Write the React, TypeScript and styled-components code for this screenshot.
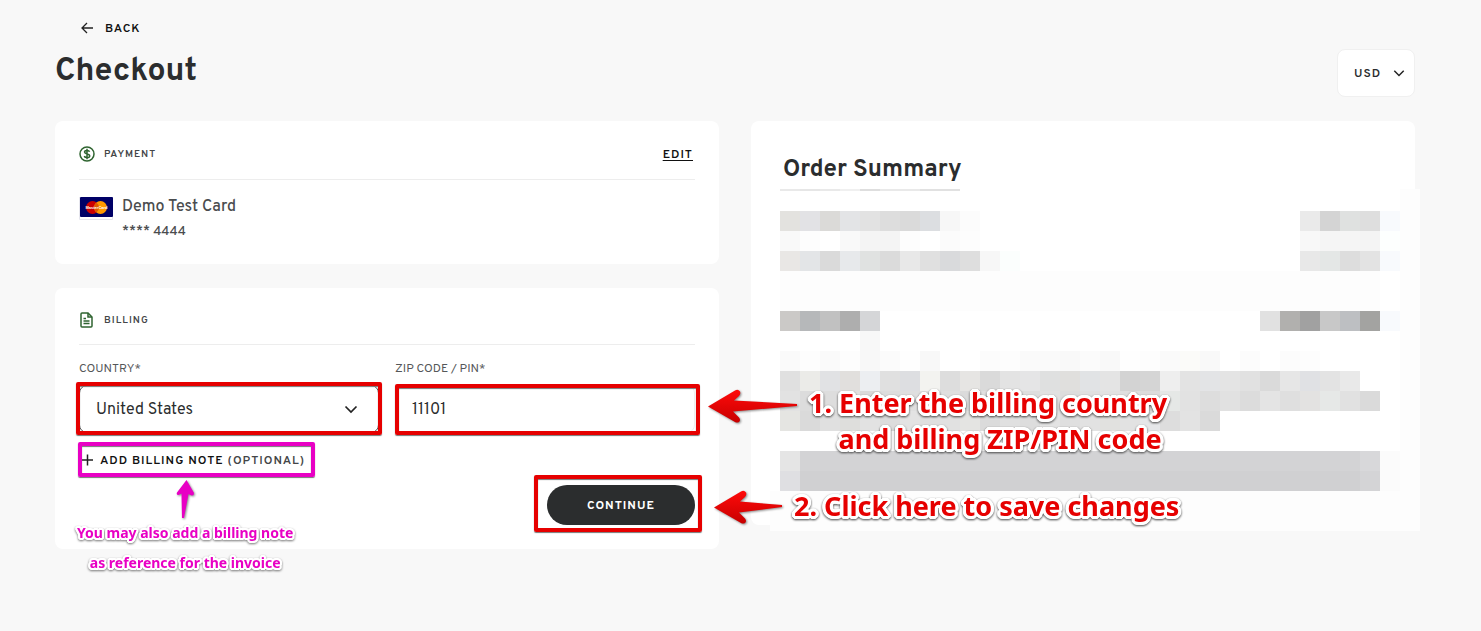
import React from "react";
import styled, { createGlobalStyle } from "styled-components";

const GlobalStyle = createGlobalStyle`
  *, *::before, *::after { box-sizing: border-box; }
  body {
    margin: 0;
    background: #f8f8f8;
    color: #2b2d2e;
    font-family: Overpass, Roboto, "Liberation Sans", sans-serif;
  }
  button, input, select { font: inherit; color: inherit; }
`;

const RED = "#e60000";
const MAGENTA = "#e800c4";

/* White halo of the given radius, built from shadows around the glyphs. */
const halo = (r: number) => {
  const steps: string[] = [];
  for (let x = -r; x <= r; x++) {
    for (let y = -r; y <= r; y++) {
      if ((x || y) && x * x + y * y <= r * r + 1) steps.push(`${x}px ${y}px 0 #fff`);
    }
  }
  return steps.join(", ");
};

const Page = styled.main`
  padding: 20px 66px 48px 55px;
`;

const BackLink = styled.a`
  display: inline-flex;
  align-items: center;
  gap: 12px;
  margin: 0 0 13px 26px;
  height: 16px;
  font-size: 12px;
  line-height: 16px;
  font-weight: 600;
  letter-spacing: 1px;
  color: #111;
  text-decoration: none;
`;

const BackText = styled.span`
  padding-top: 2px;
`;

const TitleRow = styled.header`
  display: flex;
  justify-content: space-between;
  align-items: flex-start;
  margin-bottom: 24px;
`;

const Title = styled.h1`
  margin: 0;
  font-size: 32px;
  line-height: 46px;
  font-weight: 700;
`;

const SelectWrap = styled.div`
  position: relative;
  display: flex;
  align-items: center;
`;

const SelectChevron = styled.svg<{ $right: number }>`
  position: absolute;
  right: ${(p) => p.$right}px;
  pointer-events: none;
`;

const CurrencySelect = styled.select`
  appearance: none;
  width: 78px;
  height: 48px;
  padding: 2px 0 0 16px;
  border: 1px solid #f0f0f0;
  border-radius: 8px;
  background: #fff;
  font-size: 12px;
  font-weight: 600;
  letter-spacing: 1px;
`;

const Columns = styled.div`
  display: grid;
  grid-template-columns: repeat(2, minmax(0, 1fr));
  align-items: start;
  gap: 32px;
`;

const Stack = styled.div`
  display: grid;
  gap: 24px;
`;

const Card = styled.section`
  padding: 24px;
  border-radius: 8px;
  background: #fff;
`;

const CardHeader = styled.div`
  display: flex;
  align-items: center;
  gap: 9px;
  padding-bottom: 16px;
  border-bottom: 1px solid #ededed;
`;

const CardIcon = styled.svg`
  display: block;
  flex: none;
`;

const CardTitle = styled.h2`
  flex: 1;
  margin: 0;
  padding-top: 2px;
  font-size: 10px;
  line-height: 14px;
  font-weight: 600;
  letter-spacing: 1px;
  color: #444648;
`;

const EditButton = styled.button`
  padding: 2px 2px 0 0;
  border: 0;
  background: none;
  font-size: 12px;
  line-height: 16px;
  font-weight: 600;
  letter-spacing: 1px;
  text-decoration: underline;
  text-underline-offset: 2px;
  color: #111;
`;

const PaymentMethod = styled.div`
  display: flex;
  gap: 9px;
  padding-top: 16px;
`;

const CardName = styled.p`
  margin: 0 0 6px;
  font-size: 16px;
  line-height: 22px;
  font-weight: 500;
  color: #4a4c4e;
`;

const CardNumber = styled.p`
  margin: 0;
  font-size: 13px;
  line-height: 16px;
  font-weight: 500;
  color: #4a4c4e;
`;

const Fields = styled.div`
  display: grid;
  grid-template-columns: 1fr 1fr;
  gap: 16px;
  padding-top: 16px;
`;

const Label = styled.label`
  display: block;
  margin-bottom: 8px;
  font-size: 12px;
  line-height: 16px;
  color: #555759;
`;

const CountrySelect = styled.select`
  appearance: none;
  width: 100%;
  height: 48px;
  padding: 2px 16px 0;
  border: 1px solid #555;
  border-radius: 8px;
  background: #fff;
  font-size: 16px;
`;

const ZipInput = styled.input`
  width: 100%;
  height: 48px;
  padding: 2px 16px 0;
  border: 1px solid #eee;
  border-radius: 8px;
  background: #fff;
  font-size: 16px;
`;

const Highlight = styled.div<{ $color: string; $inset: string }>`
  position: relative;
  width: fit-content;
  &::after {
    content: "";
    position: absolute;
    inset: ${(p) => p.$inset};
    border: 4px solid ${(p) => p.$color};
    border-radius: 2px;
    box-shadow: 0 1px 1px #777, inset 0 1px 1px #777;
    pointer-events: none;
  }
`;

const FieldHighlight = styled(Highlight)`
  width: 100%;
`;

const NoteHighlight = styled(Highlight)`
  margin-top: 16px;
`;

const ContinueHighlight = styled(Highlight)`
  margin: 14px 0 0 auto;
`;

const NoteButton = styled.button`
  display: flex;
  align-items: center;
  gap: 6px;
  padding: 2px 0 0;
  border: 0;
  background: none;
  font-size: 12px;
  line-height: 20px;
  font-weight: 600;
  letter-spacing: 1px;
  color: #111;
`;

const PlusIcon = styled.svg`
  margin-bottom: 2px;
`;

const Optional = styled.span`
  color: #444648;
`;

const ContinueButton = styled.button`
  display: block;
  width: 148px;
  height: 40px;
  padding: 2px 0 0;
  border: 0;
  border-radius: 20px;
  background: #2b2d2e;
  color: #fff;
  font-size: 12px;
  font-weight: 700;
  letter-spacing: 1px;
`;

const Callout = styled.div<{ $left: number; $top: number }>`
  position: absolute;
  z-index: 2;
  left: calc(100% + ${(p) => p.$left}px);
  top: ${(p) => p.$top}px;
  display: flex;
  align-items: flex-start;
  gap: 12px;
  white-space: nowrap;
`;

const CalloutText = styled.p`
  margin: 0;
  text-align: center;
  font-family: "Noto Sans", "Open Sans", sans-serif;
  font-size: 27px;
  line-height: 36px;
  font-weight: 700;
  color: ${RED};
  text-shadow: ${halo(3)};
  filter: drop-shadow(0 1px 1px #444);
`;

const SecondLine = styled.span`
  display: block;
  padding-left: 24px;
`;

const NoteCallout = styled.div`
  position: absolute;
  z-index: 2;
  top: 31px;
  left: -2px;
  white-space: nowrap;
`;

const NoteText = styled.p`
  margin: 0;
  text-align: center;
  font-family: "Noto Sans", "Open Sans", sans-serif;
  font-size: 14px;
  line-height: 30px;
  font-weight: 700;
  color: ${MAGENTA};
  text-shadow: ${halo(2)};
  filter: drop-shadow(0 1px 1px #777);
`;

const NoteArrow = styled.svg`
  display: block;
  margin-left: 99px;
  filter: drop-shadow(1px 1px 1px #888);
`;

const Arrow = styled.svg<{ $drop: number }>`
  display: block;
  margin-top: ${(p) => p.$drop}px;
  overflow: visible;
  filter: drop-shadow(1px 1px 1px #888);
`;

const SummaryCard = styled(Card)`
  padding: 32px 0 0 19px;
  height: 404px;
`;

const SummaryTitle = styled.h2`
  margin: 0 0 2px 13px;
  font-size: 24px;
  line-height: 34px;
  font-weight: 700;
`;

const Mosaic = styled.svg`
  display: block;
  overflow: visible;
`;

type Run = { x: number; y: number; cells: string };

/* Redacted order lines: each run is a strip of 20px blocks, colours in hex. */
const RUNS: Run[] = [
  { x: 780, y: 211, cells: "e3e2df e2e2e5 dbdad8 e3e4e6 e2e2e2 dddddd dadada dcdee1 f7f7f7 fcfcfc" },
  { x: 1300, y: 211, cells: "eaeaea d4d4d4 dfe1e0 dedede f8fafd" },
  { x: 780, y: 231, cells: "f9f9f9 fdfdfd ffffff f9f9f9 f4f4f4 f4f4f4 fdfdfd ffffff fbfbfb fdfdfd" },
  { x: 1300, y: 231, cells: "f8f8f8 f5f5f5 f5f5f5 f4f4f4 fdfffe" },
  { x: 780, y: 251, cells: "e9e7e5 e3e5e7 dadada e7e9eb e0e2e1 dbdbdb e8e8e8 e0e0e0 d9dadc dedede f7f7f7 fbfefd" },
  { x: 1300, y: 251, cells: "e8e8e8 e4e7e6 dddddd e3e3e3 f8fafd" },
  { x: 780, y: 311, cells: "cbc9c7 b6b8ba c1c1c1 aeaeae d5d6d8" },
  { x: 1260, y: 311, cells: "e1e1e1 b1b0ae a1a1a1 c8c8c8 bdbfc2 a3a3a1 f8fafd" },
  { x: 860, y: 331, cells: "f8f8f8" },
  { x: 780, y: 351, cells: "fafafa fdfdfd fafafa fdfdfd f8f8f8 fbfbfb fefefe f8f8f8 ffffff ffffff fcfcfc fdfdfd fafafa fafafa f9f9f9 fbfbfb f9f9f9 fefefe fdfdfd fafafa fbfbf9 f9f9f9 ffffff fcfcfc ffffff fcfcfc fdfdfd" },
  { x: 780, y: 371, cells: "e0e0e0 ebebe8 e1e2e4 e1dfdd eceef1 e0e0e0 dddee1 f3f3f0 dddddd e6e5e3 dadada e3e3e3 e5e5e6 dfe0e0 e0dfdd e1e3e5 e4e4e4 d3d3d3 d5d5d5 eeeeee e3e3e3 e3e4e6 e4e4e4 e1e1e1 dadada e6e6e6 e0e1e4 e3e3e3 e9e9e9" },
  { x: 780, y: 391, cells: "e2e2e2 dcdcdc dddddd e2e1df dadada dddddd dfdfdf e3e3e3 dfdfdf dbdbdb e0e0e0 e2e2e2 dedede e1e1e1 dddddd e0e0e0 e2e2e2 dfdfdf dcdcdc e5e8e6 e2e2e2 dddddd e1e1e1 dcdcdc e4e4e4 dfdfdf e3e2e1 e6e8e7 e1e1e1 dadada" },
  { x: 780, y: 411, cells: "e5e5e2 dadada e0e0e0 dededc e2e2e2 dcdcdc e3e3e3 dfdfdf e1e1e1 e4e4e2 dbdbdb e0e0e0 dddddd e3e3e3 dfdfdf e2e2e2 e1e1df e2e2e2 e5e7e9 dddddd e3e3e3 dadada" },
];

const STRIP = ["e9e9e9", "e6e6e6", "e9e9e9", "f0f0f0", "dedede", "e9e9e9", "e9e9e9", "e1e1e1", "e1e1e1"];

function RedactedLines() {
  return (
    <Mosaic width="650" height="342" viewBox="770 189 650 342" shapeRendering="crispEdges" aria-hidden="true">
      <rect x="1400" y="189" width="20" height="342" fill="#fdfdfd" />
      <rect x="780" y="271" width="600" height="40" fill="#fdfdfd" />
      <rect x="770" y="491" width="650" height="40" fill="#fdfdfd" />
      {STRIP.map((c, i) => (
        <rect key={i} x={780 + i * 20} y="189" width="20" height="2" fill={"#" + c} />
      ))}
      {RUNS.map((run) =>
        run.cells.split(" ").map((c, i) => (
          <rect key={run.x + "-" + run.y + "-" + i} x={run.x + i * 20} y={run.y} width="20" height="20" fill={"#" + c} />
        ))
      )}
      <rect x="780" y="451" width="20" height="20" fill="#e5e5e5" />
      <rect x="780" y="471" width="20" height="20" fill="#dfdfe2" />
      <rect x="800" y="451" width="560" height="20" fill="#d3d3d5" />
      <rect x="800" y="471" width="560" height="20" fill="#d0d0d2" />
      <rect x="1360" y="451" width="20" height="20" fill="#d8d8da" />
      <rect x="1360" y="471" width="20" height="20" fill="#d4d4d6" />
      <rect x="1380" y="451" width="20" height="40" fill="#fbfbfb" />
    </Mosaic>
  );
}

function Chevron({ size, right }: { size: number; right: number }) {
  return (
    <SelectChevron $right={right} width={size} height={size} viewBox="0 0 14 14" fill="none" stroke="#222" strokeWidth="1.7" aria-hidden="true">
      <path d="M1.5 4.5 7 10l5.500-5.500" />
    </SelectChevron>
  );
}

function RedArrow({ width, drop }: { width: number; drop: number }) {
  return (
    <Arrow $drop={drop} width={width} height="34" viewBox={`0 0 ${width} 34`} aria-hidden="true">
      <defs>
        <linearGradient id={`red${width}`} x1="0" y1="0" x2="0" y2="1">
          <stop offset="0" stopColor="#ff0a0a" />
          <stop offset="1" stopColor="#c80000" />
        </linearGradient>
      </defs>
      <path
        d={`M0 17.500 27 1.500Q30-.5 32 2.500Q33 5 31 7L26 11.500 ${width} 15V17L25 22.500 31 28.500Q33 31 31 33Q29 34 27 33Z`}
        fill={`url(#red${width})`}
      />
    </Arrow>
  );
}

export default function App() {
  return (
    <>
      <GlobalStyle />
      <Page>
        <BackLink href="#back">
          <svg width="12" height="12" viewBox="0 0 12 12" fill="none" stroke="#222" strokeWidth="1.3" aria-hidden="true">
            <path d="M12 6H1M6 1 1 6l5 5" />
          </svg>
          <BackText>BACK</BackText>
        </BackLink>
        <TitleRow>
          <Title>Checkout</Title>
          <SelectWrap>
            <CurrencySelect aria-label="Currency" defaultValue="USD">
              <option>USD</option>
            </CurrencySelect>
            <Chevron size={12} right={10} />
          </SelectWrap>
        </TitleRow>

        <Columns>
          <Stack>
            <Card>
              <CardHeader>
                <CardIcon width="16" height="16" viewBox="0 0 16 16" fill="none" stroke="#2f6430" strokeWidth="1.5" aria-hidden="true">
                  <circle cx="8" cy="8" r="7" />
                  <path d="M10.600 5.800C10.300 4.900 9.300 4.400 8 4.400 6.500 4.400 5.500 5 5.500 6.100 5.500 8.600 10.700 7.200 10.700 9.900 10.700 11 9.600 11.600 8 11.600 6.500 11.600 5.500 11 5.300 10M8 2.700v10.600" />
                </CardIcon>
                <CardTitle>PAYMENT</CardTitle>
                <EditButton type="button">EDIT</EditButton>
              </CardHeader>
              <PaymentMethod>
                <svg width="34" height="24" viewBox="0 0 34 24" role="img" aria-label="MasterCard">
                  <path d="M.5 1V23.500H33.500V1" fill="#fff" stroke="#e6e6ee" />
                  <rect x="1" y="1" width="33" height="20" rx="1" fill="#000066" />
                  <circle cx="13.500" cy="11.500" r="6.500" fill="#cc0000" />
                  <circle cx="21.500" cy="11.500" r="6.500" fill="#ff9900" />
                  <path d="M17.500 6.400a6.500 6.500 0 0 1 0 10.200 6.500 6.500 0 0 1 0-10.200" fill="#e05a00" />
                  <text x="17.500" y="13" textAnchor="middle" fontFamily="Liberation Sans, sans-serif" fontSize="4" fontWeight="700" fill="#fff">MasterCard</text>
                </svg>
                <div>
                  <CardName>Demo Test Card</CardName>
                  <CardNumber>**** 4444</CardNumber>
                </div>
              </PaymentMethod>
            </Card>

            <Card>
              <CardHeader>
                <CardIcon width="16" height="16" viewBox="0 0 16 16" fill="none" stroke="#2f6430" strokeWidth="1.500" aria-hidden="true">
                  <path d="M9 1H3Q2 1 2 2V14Q2 15 3 15H12Q13 15 13 14V5Z" />
                  <path d="M9 1V5H13M4.500 6.500H7M4.500 9H10.500M4.500 11.500H10.500" />
                </CardIcon>
                <CardTitle>BILLING</CardTitle>
              </CardHeader>
              <Fields>
                <div>
                  <Label htmlFor="country">COUNTRY*</Label>
                  <FieldHighlight $color={RED} $inset="-3px -3px -2px">
                    <SelectWrap>
                      <CountrySelect id="country" defaultValue="United States">
                        <option>United States</option>
                      </CountrySelect>
                      <Chevron size={14} right={21} />
                    </SelectWrap>
                  </FieldHighlight>
                </div>
                <div>
                  <Label htmlFor="zip">ZIP CODE / PIN*</Label>
                  <FieldHighlight $color={RED} $inset="-1px -5px -2px 0">
                    <ZipInput id="zip" defaultValue="11101" />
                    <Callout $left={13} $top={0}>
                      <RedArrow width={89} drop={4} />
                      <CalloutText>
                        1. Enter the billing country
                        <SecondLine>and billing ZIP/PIN code</SecondLine>
                      </CalloutText>
                    </Callout>
                  </FieldHighlight>
                </div>
              </Fields>
              <NoteHighlight $color={MAGENTA} $inset="-7px -10px -6px -1px">
                <NoteButton type="button">
                  <PlusIcon width="15" height="12" viewBox="0 0 15 12" stroke="#222" strokeWidth="1.500" aria-hidden="true">
                    <path d="M3 6H14M8.500 .5V11.500" />
                  </PlusIcon>
                  <span>
                    ADD BILLING NOTE <Optional>(OPTIONAL)</Optional>
                  </span>
                </NoteButton>
                <NoteCallout>
                  <NoteArrow width="20" height="38" viewBox="0 0 20 38" aria-hidden="true">
                    <path d="M10.500 0 18 13Q18 16 15.500 15.500L12.500 14 8 38H6L5.500 13.500 2.500 15Q0 15 1 12.500Z" fill={MAGENTA} />
                  </NoteArrow>
                  <NoteText>
                    You may also add a billing note
                    <br />
                    as reference for the invoice
                  </NoteText>
                </NoteCallout>
              </NoteHighlight>
              <ContinueHighlight $color={RED} $inset="-10px -7px -7px -13px">
                <ContinueButton type="button">CONTINUE</ContinueButton>
                <Callout $left={19} $top={3}>
                  <RedArrow width={68} drop={2} />
                  <CalloutText>2. Click here to save changes</CalloutText>
                </Callout>
              </ContinueHighlight>
            </Card>
          </Stack>

          <SummaryCard>
            <SummaryTitle>Order Summary</SummaryTitle>
            <RedactedLines />
          </SummaryCard>
        </Columns>
      </Page>
    </>
  );
}
